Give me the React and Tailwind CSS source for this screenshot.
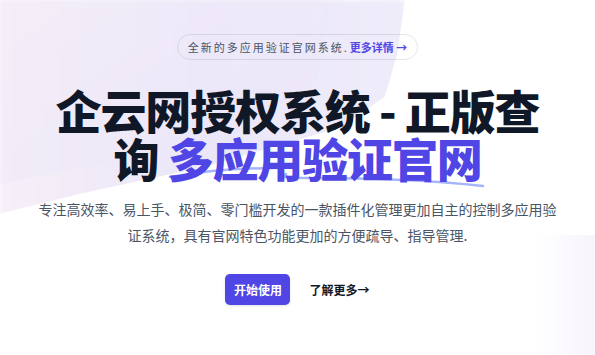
export default function App() {
  return (
    <div
      className="relative isolate h-[355px] w-full overflow-hidden bg-white"
      style={{ fontFamily: '"Noto Sans CJK SC", "Noto Sans", sans-serif' }}
    >
      {/* background blobs */}
      <div className="absolute inset-0 -z-10 overflow-hidden">
        <div className="absolute left-0 top-0 h-[220px] w-[405px] bg-gradient-to-r from-[#f6eff8] via-[#ebe7f9] to-[#efecfa] blur-[2px] [clip-path:polygon(0_0,100%_0,98%_25%,95%_44%,84%_58%,50%_76%,20%_88%,0_97%)]" />
        <div className="absolute left-0 top-0 h-[200px] w-[330px] bg-gradient-to-br from-[#f4eef9] to-[#e9e4f8] opacity-60 blur-[3px] [clip-path:polygon(0_0,100%_0,96%_40%,70%_68%,0_92%)]" />
        <div className="absolute bottom-0 right-0 h-[120px] w-[60px] bg-gradient-to-l from-[#f7f4fc] to-transparent" />
      </div>

      <div className="mx-auto flex flex-col items-center pt-[34px] text-center">
        <div className="flex h-[26px] items-center rounded-full border border-gray-900/10 px-[10px] text-[11px]">
          <span className="tracking-[2px] text-gray-600">全新的多应用验证官网系统.</span>
          <a href="#" className="ml-[1px] font-semibold text-[#4f46e5]">
            更多详情 <span aria-hidden="true">&rarr;</span>
          </a>
        </div>

        <h1 className="mt-[25px] max-w-[500px] text-[46px] font-extrabold leading-[48px] tracking-tight text-gray-900">
          企云网授权系统 - 正版查询{' '}
          <span className="relative whitespace-nowrap text-[#4f46e5]">
            <svg
              aria-hidden="true"
              viewBox="0 0 330 26"
              className="absolute left-0 top-[41px] -z-10 h-[26px] w-[330px]"
              fill="none"
            >
              <path d="M2 12 C 30 7, 70 3, 110 3" stroke="#a5b4fc" strokeWidth="2.5" strokeLinecap="round" />
              <path d="M118 9 C 110 12, 116 13, 140 13 C 210 13, 270 16, 315 21" stroke="#a5b4fc" strokeWidth="2.5" strokeLinecap="round" />
            </svg>
            <span className="relative">多应用验证官网</span>
          </span>
        </h1>

        <p className="mt-[15px] max-w-[525px] text-[14px] leading-[26px] text-gray-600">
          专注高效率、易上手、极简、零门槛开发的一款插件化管理更加自主的控制多应用验证系统，具有官网特色功能更加的方便疏导、指导管理.
        </p>

        <div className="mt-[26px] flex items-center gap-x-[19px]">
          <a
            href="#"
            className="flex h-[31px] w-[65px] items-center justify-center rounded-[5px] bg-[#4f46e5] text-[12px] font-semibold text-white shadow-sm"
          >
            开始使用
          </a>
          <a href="#" className="text-[12px] font-semibold text-gray-900">
            了解更多<span aria-hidden="true">→</span>
          </a>
        </div>
      </div>
    </div>
  );
}
